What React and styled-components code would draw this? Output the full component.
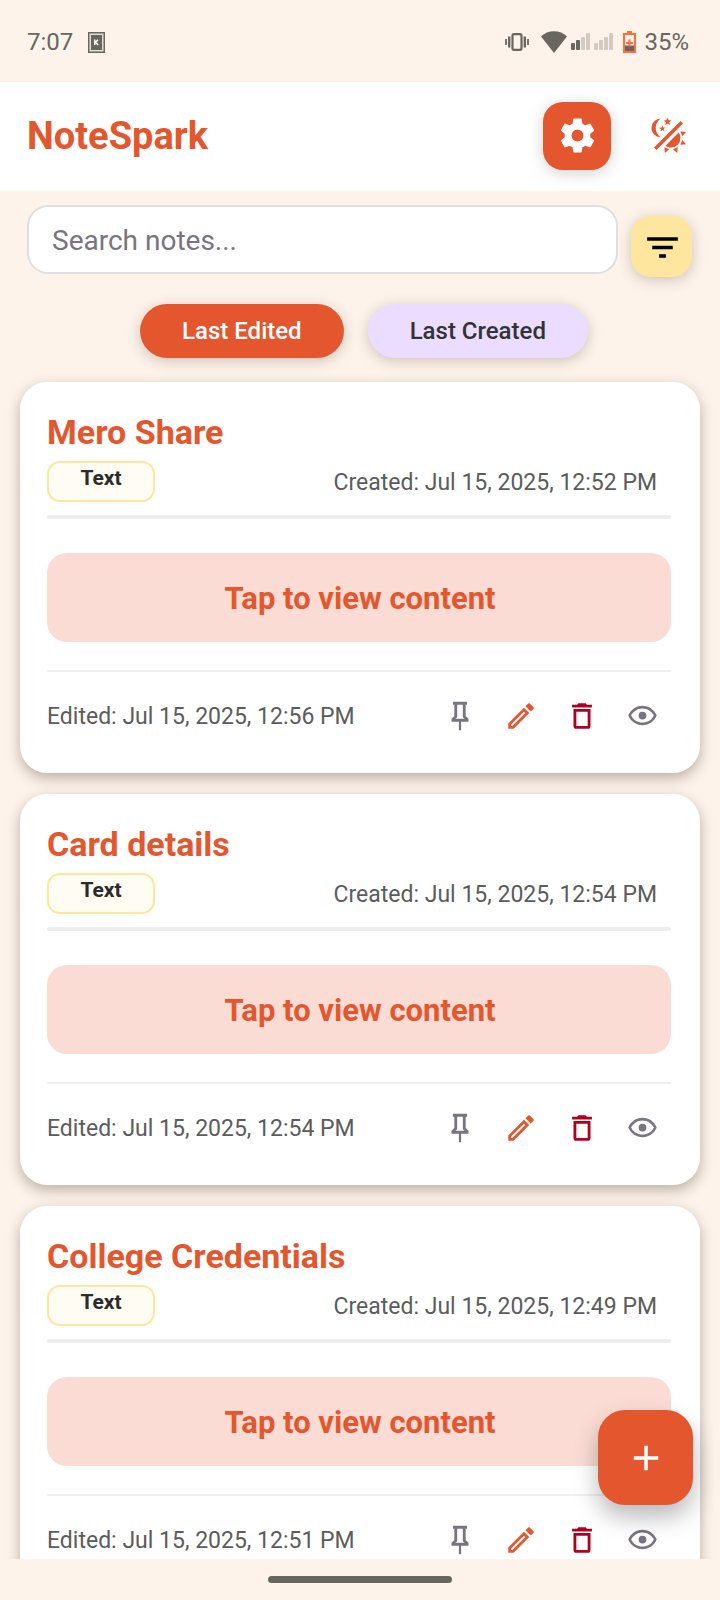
import React, { useState } from "react";
import styled, { createGlobalStyle, ThemeProvider } from "styled-components";

const theme = {
  primary: "#E4572E",
  primarySoft: "#FADCD4",
  background: "#FDF3EA",
  surface: "#FFFFFF",
  accent: "#FFE69E",
  lilac: "#EADDFF",
  text: "#333333",
  muted: "#5C5C5C",
  outline: "#79747E",
  danger: "#B00020",
  system: "#69665F",
  systemFaint: "#D3CBC1",
};

const GlobalStyle = createGlobalStyle`
  * { box-sizing: border-box; }
  body {
    margin: 0;
    background: ${theme.background};
    font-family: Roboto, "Liberation Sans", sans-serif;
  }
  button, input { font-family: inherit; }
`;

const Screen = styled.div`
  position: relative;
  display: flex;
  flex-direction: column;
  height: 100vh;
  overflow: hidden;
`;

const StatusBar = styled.div`
  display: flex;
  flex: none;
  align-items: center;
  justify-content: space-between;
  height: 82px;
  padding: 2px 31px 0 27px;
  color: ${(p) => p.theme.system};
  font-size: 24px;
  line-height: 28px;
`;

const StatusGroup = styled.div`
  display: flex;
  align-items: center;
  gap: ${(p) => p.$gap}px;
`;

const Header = styled.header`
  display: flex;
  flex: none;
  align-items: center;
  height: 109px;
  padding: 0 18px 2px 27px;
  background: ${(p) => p.theme.surface};
`;

const Brand = styled.h1`
  flex: 1;
  margin: 0;
  color: ${(p) => p.theme.primary};
  font-size: 38px;
  font-weight: 700;
  line-height: 44px;
`;

const SquareButton = styled.button`
  display: flex;
  flex: none;
  align-items: center;
  justify-content: center;
  width: ${(p) => p.$size}px;
  height: ${(p) => p.$size}px;
  padding: 0;
  border: 0;
  border-radius: 20px;
  cursor: pointer;
`;

const SettingsButton = styled(SquareButton)`
  margin-right: 23px;
  background: ${(p) => p.theme.primary};
  color: #fff;
  box-shadow: 0 3px 16px rgba(0, 0, 0, 0.18);
`;

const ThemeButton = styled(SquareButton)`
  background: transparent;
  color: ${(p) => p.theme.primary};
`;

const FilterButton = styled(SquareButton)`
  margin-top: 11px;
  padding: 2px 0 0 2px;
  background: ${(p) => p.theme.accent};
  color: #000;
  box-shadow: 0 3px 14px rgba(60, 40, 20, 0.24);
`;

const SearchRow = styled.form`
  display: flex;
  flex: none;
  align-items: flex-start;
  gap: 13px;
  padding: 14px 28px 0 27px;
`;

const SearchInput = styled.input`
  flex: 1;
  min-width: 0;
  height: 69px;
  padding: 2px 23px 0;
  border: 2px solid #dfdfdf;
  border-radius: 21px;
  background: ${(p) => p.theme.surface};
  color: ${(p) => p.theme.text};
  font-size: 28px;
  outline: none;

  &::placeholder {
    color: ${(p) => p.theme.outline};
    opacity: 1;
  }
`;

const SortRow = styled.div`
  display: flex;
  flex: none;
  justify-content: center;
  gap: 24px;
  padding: 27px 0 0 8px;
`;

const Chip = styled.button`
  height: 54px;
  padding: 0 42px;
  border: 0;
  border-radius: 27px;
  background: ${(p) => (p.$active ? p.theme.primary : p.theme.lilac)};
  color: ${(p) => (p.$active ? "#fff" : p.theme.text)};
  font-size: 24px;
  font-weight: 500;
  line-height: 28px;
  box-shadow: 0 3px 14px rgba(60, 40, 20, 0.24);
  cursor: pointer;
`;

const NoteList = styled.main`
  display: flex;
  flex: 1;
  flex-direction: column;
  gap: 21px;
  min-height: 0;
  padding: 24px 20px;
  overflow-y: auto;
  scrollbar-width: none;
`;

const Card = styled.article`
  flex: none;
  padding: 30px 29px 27px 27px;
  border-radius: 27px;
  background: ${(p) => p.theme.surface};
  box-shadow: 0 5px 14px rgba(50, 30, 20, 0.32);
`;

const CardTitle = styled.h2`
  margin: 0;
  color: ${(p) => p.theme.primary};
  font-size: 34px;
  font-weight: 700;
  line-height: 40px;
`;

const CardMeta = styled.div`
  display: flex;
  align-items: center;
  justify-content: space-between;
  margin-top: 9px;
  padding-right: 14px;
`;

const TypeBadge = styled.span`
  display: flex;
  align-items: center;
  justify-content: center;
  width: 108px;
  height: 41px;
  padding-bottom: 7px;
  border: 2px solid ${(p) => p.theme.accent};
  border-radius: 13px;
  background: #fffcf3;
  color: #2b2b2b;
  font-size: 21px;
  font-weight: 700;
  line-height: 24px;
`;

const Stamp = styled.time`
  padding-top: 2px;
  color: ${(p) => p.theme.muted};
  font-size: 23px;
  line-height: 28px;
`;

const Rule = styled.hr`
  height: ${(p) => p.$weight}px;
  margin: ${(p) => p.$top}px 0 0;
  border: 0;
  border-radius: 2px;
  background: ${(p) => (p.$weight > 2 ? "#eeeeee" : "#f0f0f0")};
`;

const RevealButton = styled.button`
  display: block;
  width: 100%;
  height: 89px;
  margin-top: 34px;
  padding: 2px 0 0 2px;
  border: 0;
  border-radius: 20px;
  background: ${(p) => p.theme.primarySoft};
  color: ${(p) => p.theme.primary};
  font-size: 31px;
  font-weight: 700;
  line-height: 36px;
  cursor: pointer;
`;

const CardFooter = styled.footer`
  display: flex;
  align-items: center;
  justify-content: space-between;
  padding-top: 13px;
`;

const Actions = styled.div`
  display: flex;
  gap: 4px;
`;

const ActionButton = styled.button`
  display: flex;
  align-items: center;
  justify-content: center;
  width: 57px;
  height: 61px;
  padding: 0;
  border: 0;
  background: transparent;
  color: ${(p) => p.theme[p.$tone]};
  cursor: pointer;
`;

const AddButton = styled(SquareButton)`
  position: absolute;
  right: 27px;
  bottom: 95px;
  border-radius: 27px;
  background: ${(p) => p.theme.primary};
  color: #fff;
  box-shadow: 0 12px 24px rgba(0, 0, 0, 0.28);
`;

const NavBar = styled.div`
  display: flex;
  flex: none;
  justify-content: center;
  height: 41px;
  padding-top: 17px;
  background: ${(p) => p.theme.background};
`;

const NavHandle = styled.div`
  width: 184px;
  height: 7px;
  border-radius: 4px;
  background: ${(p) => p.theme.system};
`;

const icons = {
  cog: "M12,15.5A3.5,3.5 0 0,1 8.5,12A3.5,3.5 0 0,1 12,8.5A3.5,3.5 0 0,1 15.5,12A3.5,3.5 0 0,1 12,15.5M19.43,12.97C19.47,12.65 19.5,12.33 19.5,12C19.5,11.67 19.47,11.34 19.43,11L21.54,9.37C21.73,9.22 21.78,8.95 21.66,8.73L19.66,5.27C19.54,5.05 19.27,4.96 19.05,5.05L16.56,6.05C16.04,5.66 15.5,5.32 14.87,5.07L14.5,2.42C14.46,2.18 14.25,2 14,2H10C9.75,2 9.54,2.18 9.5,2.42L9.13,5.07C8.5,5.32 7.96,5.66 7.44,6.05L4.95,5.05C4.73,4.96 4.46,5.05 4.34,5.27L2.34,8.73C2.21,8.95 2.27,9.22 2.46,9.37L4.57,11C4.53,11.34 4.5,11.67 4.5,12C4.5,12.33 4.53,12.65 4.57,12.97L2.46,14.63C2.27,14.78 2.21,15.05 2.34,15.27L4.34,18.73C4.46,18.95 4.73,19.03 4.95,18.95L7.44,17.94C7.96,18.34 8.5,18.68 9.13,18.93L9.5,21.58C9.54,21.82 9.75,22 10,22H14C14.25,22 14.46,21.82 14.5,21.58L14.87,18.93C15.5,18.67 16.04,18.34 16.56,17.94L19.05,18.95C19.27,19.03 19.54,18.95 19.66,18.73L21.66,15.27C21.78,15.05 21.73,14.78 21.54,14.63L19.43,12.97Z",
  themeLightDark:
    "M7.5,2C5.71,3.15 4.5,5.18 4.5,7.5C4.5,9.82 5.71,11.85 7.53,13C4.46,13 2,10.54 2,7.5A5.5,5.5 0 0,1 7.5,2M19.07,3.5L20.5,4.93L4.93,20.5L3.5,19.07L19.07,3.5M12.89,5.93L11.41,5L9.97,6L10.39,4.3L9,3.24L10.75,3.12L11.33,1.47L12,3.1L13.73,3.13L12.38,4.26L12.89,5.93M9.59,9.54L8.43,8.81L7.31,9.59L7.65,8.27L6.56,7.44L7.92,7.35L8.37,6.06L8.88,7.33L10.24,7.36L9.19,8.23L9.59,9.54M19,13.5A5.5,5.5 0 0,1 13.5,19C12.28,19 11.15,18.6 10.24,17.93L17.93,10.24C18.6,11.15 19,12.28 19,13.5M14.6,20.08L17.37,18.93L17.13,22.28L14.6,20.08M18.93,17.38L20.08,14.61L22.28,17.15L18.93,17.38M20.08,12.42L18.94,9.64L22.28,9.88L20.08,12.42M9.63,18.93L12.4,20.08L9.87,22.27L9.63,18.93Z",
  filter: "M6,13H18V11H6M3,6V8H21V6M10,18H14V16H10V18Z",
  pin: "M16,12V4H17V2H7V4H8V12L6,14V16H11.2V22H12.8V16H18V14L16,12M8.8,14L10,12.8V4H14V12.8L15.2,14H8.8Z",
  pencil:
    "M14.06,9L15,9.94L5.92,19H5V18.08L14.06,9M17.66,3C17.41,3 17.15,3.1 16.96,3.29L15.13,5.12L18.88,8.87L20.71,7.04C21.1,6.65 21.1,6 20.71,5.63L18.37,3.29C18.17,3.09 17.92,3 17.66,3M14.06,6.19L3,17.25V21H6.75L17.81,9.94L14.06,6.19Z",
  bin: "M6,19A2,2 0 0,0 8,21H16A2,2 0 0,0 18,19V7H6V19M8,9H16V19H8V9M15.5,4L14.5,3H9.5L8.5,4H5V6H19V4H15.5Z",
  eye: "M12,9A3,3 0 0,1 15,12A3,3 0 0,1 12,15A3,3 0 0,1 9,12A3,3 0 0,1 12,9M12,4.5C17,4.5 21.27,7.61 23,12C21.27,16.39 17,19.5 12,19.5C7,19.5 2.73,16.39 1,12C2.73,7.61 7,4.5 12,4.5M3.18,12C4.83,15.36 8.24,17.5 12,17.5C15.76,17.5 19.17,15.36 20.82,12C19.17,8.64 15.76,6.5 12,6.5C8.24,6.5 4.83,8.64 3.18,12Z",
  plus: "M19,13H13V19H11V13H5V11H11V5H13V11H19V13Z",
};

const Icon = ({ name, size }) => (
  <svg width={size} height={size} viewBox="0 0 24 24" fill="currentColor" aria-hidden="true">
    <path d={icons[name]} />
  </svg>
);

const CardGlyph = () => (
  <svg width="17" height="21" viewBox="0 0 17 21" aria-hidden="true">
    <rect x="0.75" y="0.75" width="15.5" height="19.5" fill="#E4DDD4" stroke={theme.system} strokeWidth="1.5" />
    <rect x="3" y="3" width="11" height="15" fill={theme.system} />
    <path d="M6.800 7.500v5.600M10 7.700L7.600 10.300L10.200 13" fill="none" stroke="#fff" strokeWidth="1.500" />
  </svg>
);

const VibrateGlyph = () => (
  <svg width="24" height="18" viewBox="0 0 24 18" fill="none" stroke={theme.system} aria-hidden="true">
    <rect x="7.5" y="1.2" width="9" height="15.6" rx="1.5" strokeWidth="2.2" />
    <path d="M1 6v6M23 6v6" strokeWidth="1.8" />
    <path d="M4.2 3.5v11M19.8 3.5v11" strokeWidth="2.4" />
  </svg>
);

const WifiGlyph = () => (
  <svg width="26" height="22" viewBox="0 0 26 22" aria-hidden="true">
    <path d="M0 5.6C3.6 2 8 .2 13 .2s9.4 1.8 13 5.4L13 22z" fill={theme.system} />
  </svg>
);

const SignalGlyph = ({ level }) => (
  <svg width="19" height="18" viewBox="0 0 19 18" aria-hidden="true">
    {[7, 10, 13, 17].map((height, i) => (
      <rect
        key={height}
        x={i * 5}
        y={17 - height}
        width="4"
        height={height}
        rx="1"
        fill={i < level ? theme.system : theme.systemFaint}
      />
    ))}
  </svg>
);

const BatteryGlyph = () => (
  <svg width="13" height="22" viewBox="0 0 13 22" aria-hidden="true">
    <path d="M4 0h5v2h4v20H0V2h4z" fill="#FF6D3B" />
    <path d="M2 4h9v16H2z" fill="#FBEFE7" />
    <path d="M2 14.5h9V20H2z" fill={theme.system} />
    <path d="M6.5 8.5v7M3 12h7" stroke="#FF6D3B" strokeWidth="2" />
  </svg>
);

const notes = [
  { title: "Mero Share", type: "Text", created: "Jul 15, 2025, 12:52 PM", edited: "Jul 15, 2025, 12:56 PM" },
  { title: "Card details", type: "Text", created: "Jul 15, 2025, 12:54 PM", edited: "Jul 15, 2025, 12:54 PM" },
  { title: "College Credentials", type: "Text", created: "Jul 15, 2025, 12:49 PM", edited: "Jul 15, 2025, 12:51 PM" },
];

const actions = [
  { label: "Pin note", icon: "pin", size: 34, tone: "outline" },
  { label: "Edit note", icon: "pencil", size: 34, tone: "primary" },
  { label: "Delete note", icon: "bin", size: 34, tone: "danger" },
  { label: "View note", icon: "eye", size: 31, tone: "outline" },
];

const NoteCard = ({ note }) => (
  <Card>
    <CardTitle>{note.title}</CardTitle>
    <CardMeta>
      <TypeBadge>{note.type}</TypeBadge>
      <Stamp>Created: {note.created}</Stamp>
    </CardMeta>
    <Rule $weight={4} $top={13} />
    <RevealButton type="button">Tap to view content</RevealButton>
    <Rule $weight={2} $top={28} />
    <CardFooter>
      <Stamp>Edited: {note.edited}</Stamp>
      <Actions>
        {actions.map((action) => (
          <ActionButton key={action.label} type="button" aria-label={action.label} $tone={action.tone}>
            <Icon name={action.icon} size={action.size} />
          </ActionButton>
        ))}
      </Actions>
    </CardFooter>
  </Card>
);

export default function App() {
  const [sort, setSort] = useState("Last Edited");

  return (
    <ThemeProvider theme={theme}>
      <GlobalStyle />
      <Screen>
        <StatusBar>
          <StatusGroup $gap={15}>
            <span>7:07</span>
            <CardGlyph />
          </StatusGroup>
          <StatusGroup $gap={10}>
            <StatusGroup $gap={12}>
              <VibrateGlyph />
              <StatusGroup $gap={4}>
                <WifiGlyph />
                <SignalGlyph level={2} />
                <SignalGlyph level={0} />
              </StatusGroup>
            </StatusGroup>
            <StatusGroup $gap={8}>
              <BatteryGlyph />
              <span>35%</span>
            </StatusGroup>
          </StatusGroup>
        </StatusBar>

        <Header>
          <Brand>NoteSpark</Brand>
          <SettingsButton type="button" aria-label="Settings" $size={68}>
            <Icon name="cog" size={41} />
          </SettingsButton>
          <ThemeButton type="button" aria-label="Toggle theme" $size={68}>
            <Icon name="themeLightDark" size={41} />
          </ThemeButton>
        </Header>

        <SearchRow onSubmit={(event) => event.preventDefault()}>
          <SearchInput type="text" aria-label="Search notes" placeholder="Search notes..." />
          <FilterButton type="button" aria-label="Filter" $size={61}>
            <Icon name="filter" size={41} />
          </FilterButton>
        </SearchRow>

        <SortRow>
          {["Last Edited", "Last Created"].map((name) => (
            <Chip key={name} type="button" $active={sort === name} onClick={() => setSort(name)}>
              {name}
            </Chip>
          ))}
        </SortRow>

        <NoteList>
          {notes.map((note) => (
            <NoteCard key={note.title} note={note} />
          ))}
        </NoteList>

        <NavBar>
          <NavHandle />
        </NavBar>

        <AddButton type="button" aria-label="Add note" $size={95}>
          <Icon name="plus" size={42} />
        </AddButton>
      </Screen>
    </ThemeProvider>
  );
}
